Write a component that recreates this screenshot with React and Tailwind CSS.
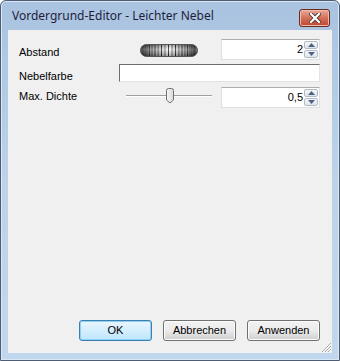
import React from 'react';

const ui = { fontFamily: '"Liberation Sans", Arial, sans-serif' };

function JogWheel() {
  const lines = [];
  for (let k = -11; k <= 11; k++) {
    const x = 28.5 + 27 * Math.sin((k * Math.PI) / 24);
    lines.push(<line key={k} x1={x} y1="1" x2={x} y2="12" stroke="#1a1a1a" strokeWidth={k % 2 === 0 ? 1 : 0.7} />);
  }
  return (
    <svg width="58" height="13" viewBox="0 0 58 13">
      <defs>
        <linearGradient id="jh" x1="0" x2="1" y1="0" y2="0">
          <stop offset="0" stopColor="#3a3a3a" />
          <stop offset="0.25" stopColor="#a8a8a8" />
          <stop offset="0.5" stopColor="#fafafa" />
          <stop offset="0.75" stopColor="#a8a8a8" />
          <stop offset="1" stopColor="#3a3a3a" />
        </linearGradient>
        <linearGradient id="jv" x1="0" x2="0" y1="0" y2="1">
          <stop offset="0" stopColor="#000" stopOpacity="0.3" />
          <stop offset="0.4" stopColor="#fff" stopOpacity="0.25" />
          <stop offset="1" stopColor="#000" stopOpacity="0.35" />
        </linearGradient>
        <clipPath id="jc">
          <rect x="0.5" y="0.5" width="57" height="12" rx="6" />
        </clipPath>
      </defs>
      <rect x="0.5" y="0.5" width="57" height="12" rx="6" fill="url(#jh)" />
      <g clipPath="url(#jc)">{lines}</g>
      <rect x="0.5" y="0.5" width="57" height="12" rx="6" fill="url(#jv)" stroke="#555" />
    </svg>
  );
}

function SpinBox({ value }) {
  return (
    <div className="flex h-[21px] w-[99px] border border-[#dbdfe6] border-t-[#abadb3] bg-white">
      <div className="flex flex-1 items-center justify-end pr-[1px] text-[11px] text-black">{value}</div>
      <div className="flex w-[15px] flex-col gap-[1px] py-[1px] pr-[1px]">
        {['up', 'down'].map((d) => (
          <div key={d} className="flex flex-1 items-center justify-center rounded-[2px] border border-[#b4b9c4] bg-gradient-to-b from-[#f6f7f9] to-[#dfe3ea]">
            <svg width="7" height="4" viewBox="0 0 7 4">
              {d === 'up' ? <path d="M0 4 L3.5 0 L7 4 Z" fill="#4d6185" /> : <path d="M0 0 L3.5 4 L7 0 Z" fill="#4d6185" />}
            </svg>
          </div>
        ))}
      </div>
    </div>
  );
}

function Button({ children, active }) {
  return (
    <button
      className={`h-[21px] w-[73px] rounded-[3px] border text-[11px] text-black ${
        active
          ? 'border-[#3c7fb1] bg-gradient-to-b from-[#eaf6fd] to-[#bee6fd] shadow-[inset_0_0_0_1px_#8ed1f5]'
          : 'border-[#707070] bg-gradient-to-b from-[#f2f2f2] via-[#ebebeb] to-[#cfcfcf] shadow-[inset_0_0_0_1px_#fcfcfc]'
      }`}
    >
      {children}
    </button>
  );
}

export default function App() {
  return (
    <div className="h-[361px] w-[340px] bg-white" style={ui}>
      <div className="flex h-full w-full flex-col rounded-t-[6px] border border-[#4e5d73] bg-gradient-to-b from-[#a9c3e0] via-[#bcd3ea] to-[#c0d7ee] shadow-[inset_0_0_0_1px_#d9e8f6]">
        {/* title bar */}
        <div className="flex h-[29px] items-start justify-between pl-[11px] pr-[9px]">
          <span className="pt-[6px] text-[12px] text-[#1e1e3c]" style={{ fontFamily: '"Noto Sans", "Open Sans", sans-serif' }}>
            Vordergrund-Editor - Leichter Nebel
          </span>
          <div className="mt-[8px] flex h-[18px] w-[31px] items-center justify-center rounded-[3px] border border-[#6b2a1e] bg-gradient-to-b from-[#e8a999] via-[#d3705b] to-[#c0432e] shadow-[inset_0_0_0_1px_#eebcae]">
            <svg width="12" height="10" viewBox="0 0 12 10">
              <path d="M2 1 L10 9 M10 1 L2 9" stroke="#4a3430" strokeWidth="4" strokeLinecap="square" />
              <path d="M2 1 L10 9 M10 1 L2 9" stroke="#fff" strokeWidth="2.2" strokeLinecap="square" />
            </svg>
          </div>
        </div>

        {/* client area */}
        <div className="mx-[7px] mb-[7px] flex flex-1 flex-col bg-[#f0f0f0] pl-[11px] pr-[12px]">
          <div className="mt-[9px] flex h-[21px] items-start">
            <span className="mt-[7px] w-[121px] text-[11px] leading-[13px] text-black">Abstand</span>
            <div className="mt-[5px] w-[81px]">
              <JogWheel />
            </div>
            <SpinBox value="2" />
          </div>

          <div className="mt-[4px] flex h-[18px] items-start">
            <span className="mt-[6px] w-[100px] text-[11px] leading-[13px] text-black">Nebelfarbe</span>
            <div className="h-[18px] flex-1 border border-[#e3e3e3] border-l-[#6d6d6d] border-t-[#6d6d6d] bg-white" />
          </div>

          <div className="mt-[5px] flex h-[21px] items-start">
            <span className="mt-[3px] w-[107px] text-[11px] leading-[13px] text-black">Max. Dichte</span>
            <div className="relative mt-[1px] h-[16px] w-[95px]">
              <div className="absolute left-0 top-[7px] h-[2px] w-[86px] border-t border-[#a0a0a0] border-b border-b-white" />
              <svg className="absolute left-[39px] top-0" width="10" height="16" viewBox="0 0 10 16">
                <defs>
                  <linearGradient id="th" x1="0" x2="1" y1="0" y2="0">
                    <stop offset="0" stopColor="#f7f7f7" />
                    <stop offset="1" stopColor="#d8d8d8" />
                  </linearGradient>
                </defs>
                <path d="M1.5 2.5 Q1.5 0.5 3.5 0.5 L6.5 0.5 Q8.5 0.5 8.5 2.5 L8.5 12 L5 15 L1.5 12 Z" fill="url(#th)" stroke="#707070" />
              </svg>
            </div>
            <SpinBox value="0,5" />
          </div>

          <div className="flex-1" />

          <div className="flex justify-end gap-[11px]">
            <Button active>OK</Button>
            <Button>Abbrechen</Button>
            <Button>Anwenden</Button>
          </div>
          {/* resize grip */}
          <div className="-mr-[12px] flex h-[12px] justify-end">
            <svg width="12" height="12" viewBox="0 0 12 12">
              <path d="M2 11 L11 2 M5 11 L11 5 M8 11 L11 8" stroke="#a7a7a7" strokeWidth="1" />
              <path d="M3 11 L11 3 M6 11 L11 6 M9 11 L11 9" stroke="#ffffff" strokeWidth="1" />
            </svg>
          </div>
        </div>
      </div>
    </div>
  );
}
